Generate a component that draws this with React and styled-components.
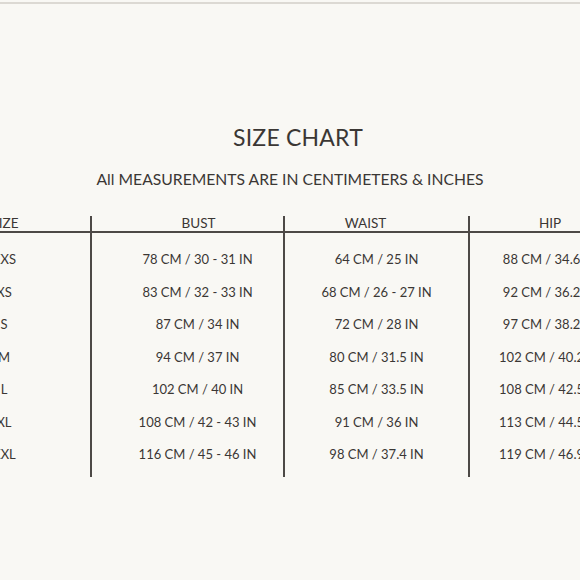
import React from "react";
import styled, { createGlobalStyle } from "styled-components";

const Global = createGlobalStyle`
  html, body { margin: 0; padding: 0; background: #f9f8f4; }
  body { font-family: Lato, "Open Sans", sans-serif; color: #3b3734; }
`;

const Page = styled.div`
  width: 580px;
  height: 580px;
  overflow: hidden;
  background: #f9f8f4;
  display: flex;
  flex-direction: column;
  align-items: center;
`;

const TopRule = styled.div`
  align-self: stretch;
  height: 2px;
  margin-top: 2px;
  background: #dcd9d3;
`;

const Title = styled.h1`
  margin: 120px 0 0;
  padding-left: 16px;
  font-size: 23px;
  font-weight: 400;
  line-height: 26px;
  letter-spacing: 0.2px;
`;

const Subtitle = styled.h2`
  margin: 20px 0 0;
  font-size: 15.7px;
  font-weight: 400;
  line-height: 19px;
`;

const Table = styled.div`
  align-self: flex-start;
  margin: 27px 0 0 -82px;
  display: flex;
`;

const Column = styled.div`
  width: ${(p) => p.$w}px;
  display: flex;
  flex-direction: column;
  border-right: ${(p) => (p.$last ? "none" : "2px solid #4d4946")};
`;

const Head = styled.div`
  height: 15px;
  line-height: 14px;
  padding-left: ${(p) => (p.$shift > 0 ? p.$shift : 0)}px;
  padding-right: ${(p) => (p.$shift < 0 ? -p.$shift : 0)}px;
  text-align: center;
  font-size: 13.5px;
  border-bottom: 2px solid #4d4946;
  margin-right: ${(p) => (p.$last ? 0 : -2)}px;
`;

const Body = styled.div`
  padding: 10px 0 6px;
  display: flex;
  flex-direction: column;
`;

const Cell = styled.div`
  height: 32.5px;
  line-height: 32px;
  padding-left: ${(p) => p.$shift || 0}px;
  text-align: center;
  font-size: 13px;
  white-space: nowrap;
`;

const columns = [
  { name: "SIZE", w: 172, shift: 0, head: 0, rows: ["XXS", "XS", "S", "M", "L", "XL", "XXL"] },
  {
    name: "BUST",
    w: 191,
    shift: 20,
    head: 20,
    rows: [
      "78 CM / 30 - 31 IN",
      "83 CM / 32 - 33 IN",
      "87 CM / 34 IN",
      "94 CM / 37 IN",
      "102 CM / 40 IN",
      "108 CM / 42 - 43 IN",
      "116 CM / 45 - 46 IN",
    ],
  },
  {
    name: "WAIST",
    w: 183,
    shift: 0,
    head: -24,
    rows: [
      "64 CM / 25 IN",
      "68 CM / 26 - 27 IN",
      "72 CM / 28 IN",
      "80 CM / 31.5 IN",
      "85 CM / 33.5 IN",
      "91 CM / 36 IN",
      "98 CM / 37.4 IN",
    ],
  },
  {
    name: "HIP",
    w: 160,
    shift: 0,
    head: 0,
    last: true,
    rows: [
      "88 CM / 34.6 IN",
      "92 CM / 36.2 IN",
      "97 CM / 38.2 IN",
      "102 CM / 40.2 IN",
      "108 CM / 42.5 IN",
      "113 CM / 44.5 IN",
      "119 CM / 46.9 IN",
    ],
  },
];

export default function App() {
  return (
    <Page>
      <Global />
      <TopRule />
      <Title>SIZE CHART</Title>
      <Subtitle>All MEASUREMENTS ARE IN CENTIMETERS &amp; INCHES</Subtitle>
      <Table>
        {columns.map((c) => (
          <Column key={c.name} $w={c.w} $last={c.last}>
            <Head $shift={c.head} $last={c.last}>{c.name}</Head>
            <Body>
              {c.rows.map((r) => (
                <Cell key={r} $shift={c.shift}>{r}</Cell>
              ))}
            </Body>
          </Column>
        ))}
      </Table>
    </Page>
  );
}
